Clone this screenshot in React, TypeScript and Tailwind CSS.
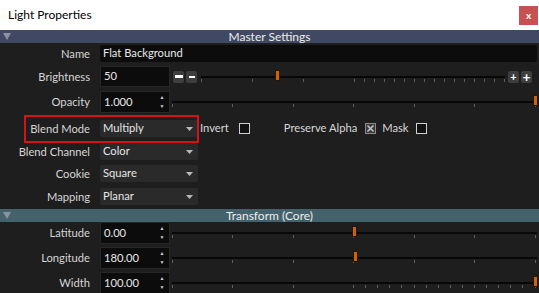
import React from 'react'

const FONT = { fontFamily: 'Lato, "Open Sans", sans-serif' }

type SliderProps = {
  ticks: number[]
  thumb: number
}

// slider: black track, grey ticks below, orange thumb
function Slider({ ticks, thumb }: SliderProps) {
  return (
    <div className="relative h-full flex-1">
      <div className="absolute left-0 right-0 top-[10px] h-[2px] bg-[#080808]" />
      {ticks.map((t) => (
        <div key={t} className="absolute top-[13px] h-[3px] w-px bg-[#5e5e5e]" style={{ left: t }} />
      ))}
      <div
        className="absolute top-[4px] h-[11px] w-[5px] border border-[#2a1405] bg-[#c8640f]"
        style={{ left: thumb }}
      />
    </div>
  )
}

function SectionHeader({ title, color }: { title: string; color: string }) {
  return (
    <div className={`relative flex h-[13px] items-center justify-center ${color}`}>
      <svg width="8" height="7" viewBox="0 0 8 7" className="absolute left-[3px] top-[3px]">
        <path d="M0 0 H8 L4 7 Z" fill="#8c92a3" />
      </svg>
      <span className="text-[12px] leading-none text-[#ececec]">{title}</span>
    </div>
  )
}

function Label({ children }: { children: React.ReactNode }) {
  return <div className="w-[90px] shrink-0 text-right text-[11.2px] leading-none text-[#d6d6d6]">{children}</div>
}

function SpinInput({ value }: { value: string }) {
  return (
    <div className="flex h-[22px] w-[70px] shrink-0 items-center justify-between border border-[#262626] bg-[#0c0c0c] pl-[3px] text-[11.2px] text-[#e8e8e8]">
      <span>{value}</span>
      <div className="flex h-full w-[14px] flex-col items-center justify-between py-[3px]">
        <span className="text-[5px] leading-none text-[#d0d0d0]">▲</span>
        <span className="text-[5px] leading-none text-[#d0d0d0]">▼</span>
      </div>
    </div>
  )
}

function Dropdown({ value }: { value: string }) {
  return (
    <div className="flex h-[17px] w-[98px] shrink-0 items-center justify-between rounded-[2px] bg-[#2a2a2a] pl-[3px] pr-[5px] text-[11.2px] text-[#e6e6e6]">
      <span>{value}</span>
      <svg width="7" height="4" viewBox="0 0 7 4">
        <path d="M0 0 H7 L3.5 4 Z" fill="#b8b8b8" />
      </svg>
    </div>
  )
}

function Checkbox({ checked = false }: { checked?: boolean }) {
  if (checked) {
    return (
      <svg width="11" height="11" viewBox="0 0 11 11" className="shrink-0">
        <rect x="0" y="0" width="11" height="11" fill="#8a8a8a" />
        <rect x="1" y="1" width="9" height="9" fill="#3a3a3a" />
        <path d="M2.5 2.5 L8.5 8.5 M8.5 2.5 L2.5 8.5" stroke="#c4c4c4" strokeWidth="1.6" />
      </svg>
    )
  }
  return <div className="h-[11px] w-[11px] shrink-0 border border-[#d0d0d0] bg-[#121212]" />
}

function SmallButton({ children }: { children: React.ReactNode }) {
  return (
    <div className="flex h-[12px] w-[11px] items-center justify-center rounded-[2px] bg-[#3e3e3e]">{children}</div>
  )
}

const BIG_TICKS = [0, 60, 121, 181, 242, 302, 363]
const WIDTH_TICKS = [0, 60, 121, 181, 193, 205, 217, 229, 242, 254, 266, 278, 290, 302, 314, 326, 338, 350, 363]
const BRIGHT_TICKS = [0, 51, 102, 153, 163, 173, 183, 193, 203, 213, 223, 233, 243, 253, 263, 273, 283, 293, 303]

export default function App() {
  return (
    <div className="h-[293px] w-[539px] overflow-hidden bg-[#1e1e1e]" style={FONT}>
      {/* title bar */}
      <div className="flex h-[30px] items-center justify-between bg-white pl-[8px] pr-[1px]">
        <span className="text-[12px] text-black">Light Properties</span>
        <div className="flex h-[19px] w-[19px] items-center justify-center bg-[#c75050] text-[10px] font-bold leading-none text-white">
          x
        </div>
      </div>

      <SectionHeader title="Master Settings" color="bg-[#404863]" />

      <div className="flex flex-col pr-[2px]">
        {/* Name */}
        <div className="mt-[2px] flex h-[17px] items-center gap-[10px]">
          <Label>Name</Label>
          <div className="flex h-full flex-1 items-center rounded-[2px] bg-[#0c0c0c] pl-[3px] text-[11.2px] text-[#e8e8e8]">
            Flat Background
          </div>
        </div>

        {/* Brightness */}
        <div className="mt-[4px] flex h-[21px] items-center gap-[10px]">
          <Label>Brightness</Label>
          <div className="flex h-full items-center">
            <div className="flex h-[21px] w-[70px] items-center border border-[#262626] bg-[#0c0c0c] pl-[3px] text-[11.2px] text-[#e8e8e8]">
              50
            </div>
            <div className="ml-[3px] flex gap-[2px]">
              <SmallButton>
                <div className="h-[3px] w-[8px] bg-white" />
              </SmallButton>
              <SmallButton>
                <div className="h-[2px] w-[6px] bg-white" />
              </SmallButton>
            </div>
          </div>
          <div className="-ml-[6px] flex h-full flex-1 items-center">
            <Slider ticks={BRIGHT_TICKS} thumb={74} />
            <div className="ml-[3px] flex gap-[2px] pr-[5px]">
              <SmallButton>
                <span className="text-[11px] font-bold leading-none text-white">+</span>
              </SmallButton>
              <SmallButton>
                <span className="text-[14px] font-bold leading-none text-white">+</span>
              </SmallButton>
            </div>
          </div>
        </div>

        {/* Opacity */}
        <div className="mt-[4px] flex h-[22px] items-center gap-[10px]">
          <Label>Opacity</Label>
          <SpinInput value="1.000" />
          <div className="-ml-[8px] flex h-full flex-1">
            <Slider ticks={BIG_TICKS} thumb={361} />
          </div>
        </div>

        {/* Blend Mode */}
        <div className="relative mt-[2px] flex h-[27px] items-center gap-[10px]">
          <div className="pointer-events-none absolute left-[24px] top-0 h-[28px] w-[175px] border-2 border-[#d41414]" />
          <Label>Blend Mode</Label>
          <Dropdown value="Multiply" />
          <div className="-ml-[8px] flex items-center text-[11.2px] text-[#d8d8d8]">
            <span>Invert</span>
            <div className="ml-[10px]">
              <Checkbox />
            </div>
            <span className="ml-[34px]">Preserve Alpha</span>
            <div className="ml-[8px]">
              <Checkbox checked />
            </div>
            <span className="ml-[6px]">Mask</span>
            <div className="ml-[7px]">
              <Checkbox />
            </div>
          </div>
        </div>

        {/* dropdown rows */}
        <div className="mt-[1px] flex h-[17px] items-center gap-[10px]">
          <Label>Blend Channel</Label>
          <Dropdown value="Color" />
        </div>
        <div className="mt-[5px] flex h-[17px] items-center gap-[10px]">
          <Label>Cookie</Label>
          <Dropdown value="Square" />
        </div>
        <div className="mt-[6px] flex h-[17px] items-center gap-[10px]">
          <Label>Mapping</Label>
          <Dropdown value="Planar" />
        </div>
      </div>

      <div className="mt-[4px]">
        <SectionHeader title="Transform (Core)" color="bg-[#43626b]" />
      </div>

      <div className="flex flex-col pr-[2px]">
        <div className="flex h-[22px] items-center gap-[10px]">
          <Label>Latitude</Label>
          <SpinInput value="0.00" />
          <div className="-ml-[8px] flex h-full flex-1">
            <Slider ticks={BIG_TICKS} thumb={180} />
          </div>
        </div>
        <div className="mt-[3px] flex h-[22px] items-center gap-[10px]">
          <Label>Longitude</Label>
          <SpinInput value="180.00" />
          <div className="-ml-[8px] flex h-full flex-1">
            <Slider ticks={BIG_TICKS} thumb={181} />
          </div>
        </div>
        <div className="mt-[3px] flex h-[22px] items-center gap-[10px]">
          <Label>Width</Label>
          <SpinInput value="100.00" />
          <div className="-ml-[8px] flex h-full flex-1">
            <Slider ticks={WIDTH_TICKS} thumb={361} />
          </div>
        </div>
      </div>
    </div>
  )
}
